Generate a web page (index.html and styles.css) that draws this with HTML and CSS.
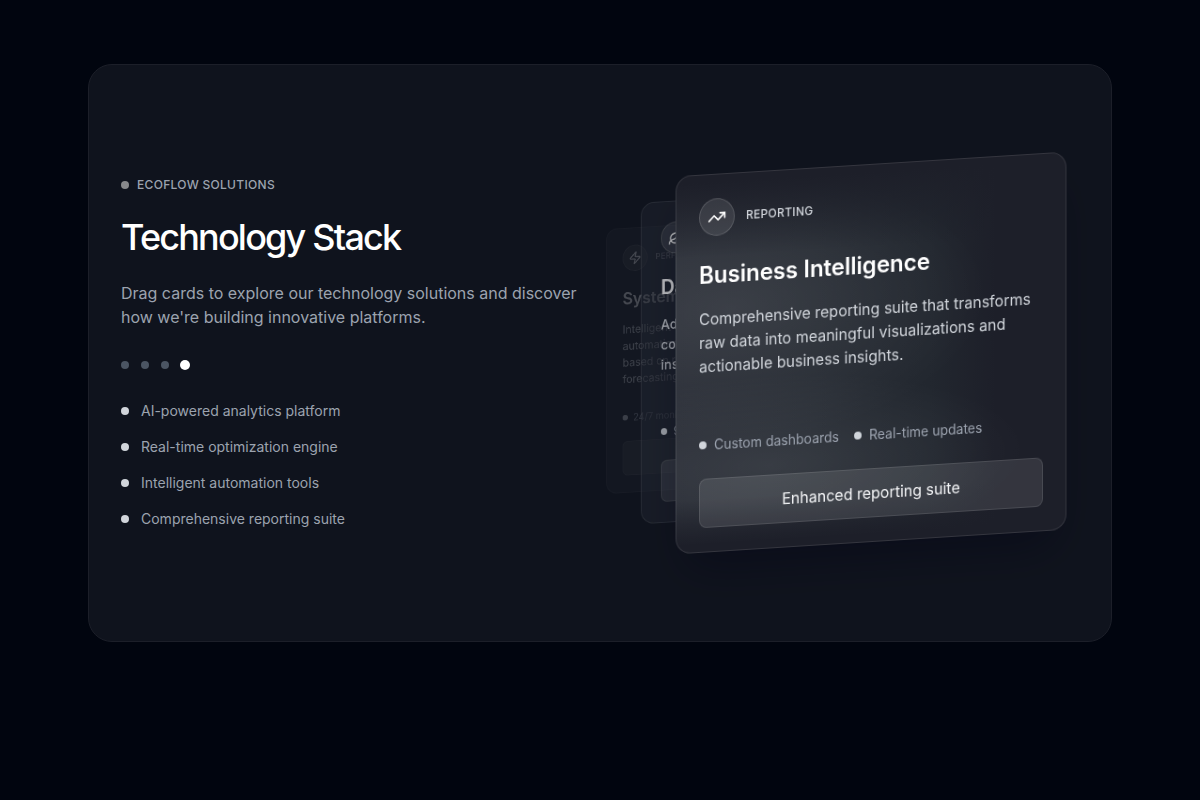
FILE: index.html
```html
<!DOCTYPE html>
<html lang="en">
<head>
<meta charset="utf-8">
<meta name="viewport" content="width=device-width, initial-scale=1">
<title>Technology Stack</title>
<link rel="stylesheet" href="styles.css">
</head>
<body>
<main class="page">
  <section class="panel">
    <div class="intro">
      <div class="eyebrow"><span class="eyebrow-dot"></span>ECOFLOW SOLUTIONS</div>
      <h1 class="title">Technology Stack</h1>
      <p class="lead">Drag cards to explore our technology solutions and discover how we're building innovative platforms.</p>
      <div class="pager">
        <button class="pager-dot" type="button" aria-label="Card 1"></button>
        <button class="pager-dot" type="button" aria-label="Card 2"></button>
        <button class="pager-dot" type="button" aria-label="Card 3"></button>
        <button class="pager-dot pager-dot-active" type="button" aria-label="Card 4"></button>
      </div>
      <ul class="features">
        <li class="feature">AI-powered analytics platform</li>
        <li class="feature">Real-time optimization engine</li>
        <li class="feature">Intelligent automation tools</li>
        <li class="feature">Comprehensive reporting suite</li>
      </ul>
    </div>

    <div class="stage">
      <article class="card card-back">
        <header class="card-head">
          <span class="card-icon"><svg viewBox="0 0 24 24"><path d="M4 14a1 1 0 0 1-.78-1.63l9.9-10.2a.5.5 0 0 1 .86.46l-1.92 6.02A1 1 0 0 0 13 10h7a1 1 0 0 1 .78 1.63l-9.9 10.2a.5.5 0 0 1-.86-.46l1.92-6.02A1 1 0 0 0 11 14z"/></svg></span>
          <span class="card-label">PERFORMANCE</span>
        </header>
        <h2 class="card-title">System Optimization</h2>
        <p class="card-text">Intelligent workflow orchestration with smart automation of repetitive business operations based on real-time usage and demand forecasting.</p>
        <div class="card-tags"><span class="tag">24/7 monitoring</span><span class="tag">Auto-scaling</span></div>
        <button class="card-action" type="button">Real-time optimization</button>
      </article>

      <article class="card card-middle">
        <header class="card-head">
          <span class="card-icon"><svg viewBox="0 0 24 24"><path d="M11 20A7 7 0 0 1 9.8 6.1C15.5 5 17 4.48 19 2c1 2 2 4.18 2 8 0 5.5-4.78 10-10 10Z"/><path d="M2 21c0-3 1.85-5.36 5.08-6C9.5 14.52 12 13 13 12"/></svg></span>
          <span class="card-label">ANALYTICS</span>
        </header>
        <h2 class="card-title">Data Analytics</h2>
        <p class="card-text">Advanced machine learning models that deliver comprehensive data analysis and actionable insights for your business.</p>
        <div class="card-tags"><span class="tag">99% accuracy</span><span class="tag">Live insights</span></div>
        <button class="card-action" type="button">AI-powered analytics</button>
      </article>

      <article class="card card-front">
        <header class="card-head">
          <span class="card-icon"><svg viewBox="0 0 24 24"><path d="M22 7l-8.5 8.5-5-5L2 17"/><path d="M16 7h6v6"/></svg></span>
          <span class="card-label">REPORTING</span>
        </header>
        <h2 class="card-title">Business Intelligence</h2>
        <p class="card-text">Comprehensive reporting suite that transforms raw data into meaningful visualizations and actionable business insights.</p>
        <div class="card-tags"><span class="tag">Custom dashboards</span><span class="tag">Real-time updates</span></div>
        <button class="card-action" type="button">Enhanced reporting suite</button>
      </article>
    </div>
  </section>
</main>
</body>
</html>
```
FILE: styles.css
```css
* { box-sizing: border-box; }

body {
  margin: 0;
  min-height: 100vh;
  background: #01050f;
  color: #fff;
  font-family: Inter, "Liberation Sans", sans-serif;
}

h1, h2, p, ul { margin: 0; padding: 0; }

button { font: inherit; color: inherit; cursor: pointer; }

.page {
  max-width: 1088px;
  margin: 0 auto;
  padding: 64px 32px;
}

.panel {
  display: grid;
  grid-template-columns: 1fr 1fr;
  gap: 32px;
  align-items: center;
  padding: 32px;
  border: 1px solid #1c1f29;
  border-radius: 24px;
  background: #0f131d;
}

.eyebrow {
  display: flex;
  align-items: center;
  gap: 8px;
  font-size: 12px;
  line-height: 16px;
  font-weight: 500;
  letter-spacing: 0.3px;
  color: #9ca3af;
}

.eyebrow-dot {
  width: 8px;
  height: 8px;
  border-radius: 50%;
  background: #87888b;
}

.title {
  margin-top: 24px;
  font-size: 36px;
  line-height: 40px;
  font-weight: 500;
  letter-spacing: -1.8px;
}

.lead {
  margin-top: 24px;
  font-size: 16px;
  line-height: 24px;
  color: #9ca3af;
}

.pager {
  display: flex;
  gap: 12px;
  margin-top: 32px;
}

.pager-dot {
  width: 8px;
  height: 8px;
  padding: 0;
  border: 0;
  border-radius: 50%;
  background: #4b5563;
}

.pager-dot-active {
  background: #fff;
  transform: scale(1.25);
}

.features {
  display: flex;
  flex-direction: column;
  gap: 16px;
  margin-top: 32px;
  list-style: none;
}

.feature {
  display: flex;
  align-items: center;
  gap: 12px;
  font-size: 14px;
  line-height: 20px;
  color: #9ca3af;
}

.feature::before,
.tag::before {
  content: "";
  flex: none;
  width: 8px;
  height: 8px;
  border-radius: 50%;
  background: #d1d5db;
}

.stage {
  display: grid;
  place-items: center;
  height: 512px;
}

.card {
  grid-area: 1 / 1;
  display: flex;
  flex-direction: column;
  width: 100%;
  max-width: 416px;
  height: 384px;
  padding: 24px;
  border: 1px solid rgba(255, 255, 255, 0.1);
  border-radius: 16px;
  background: rgba(255, 255, 255, 0.06);
  will-change: transform;
}

.card-front {
  transform: translateX(23px) rotateX(-10deg) rotateY(20deg);
  background:
    linear-gradient(180deg, #1d1f29 2%, rgba(29, 31, 41, 0) 22%, rgba(29, 31, 41, 0) 86%, #1d1f29 98%),
    radial-gradient(ellipse 66% 36% at 14% 36%, rgba(255, 255, 255, 0.09), rgba(255, 255, 255, 0)),
    radial-gradient(ellipse 66% 24% at 24% 78%, rgba(255, 255, 255, 0.08), rgba(255, 255, 255, 0)),
    linear-gradient(90deg, #292d36 0%, #262b33 35%, #22272f 65%, #1d1f29 82%);
  background-origin: border-box;
  box-shadow: 0 25px 50px -12px rgba(0, 0, 20, 0.4);
}

.card-middle {
  transform: translateX(-41px) rotateX(-10deg) rotateY(20deg) scale(0.85);
  background: rgba(33, 38, 48, 0.6);
  opacity: 0.7;
}

.card-back {
  transform: translateX(-105px) rotateX(-10deg) rotateY(20deg) scale(0.7);
  opacity: 0.22;
}

.card-head {
  display: flex;
  align-items: center;
  gap: 12px;
}

.card-icon {
  display: grid;
  place-items: center;
  width: 38px;
  height: 38px;
  border: 1px solid rgba(255, 255, 255, 0.15);
  border-radius: 50%;
  background: rgba(255, 255, 255, 0.1);
}

.card-icon svg {
  width: 20px;
  height: 20px;
  fill: none;
  stroke: #fff;
  stroke-width: 2;
  stroke-linecap: round;
  stroke-linejoin: round;
}

.card-label {
  font-size: 12px;
  line-height: 16px;
  font-weight: 500;
  letter-spacing: 0.3px;
  color: #d1d5db;
}

.card-title {
  margin-top: 24px;
  font-size: 24px;
  line-height: 32px;
  font-weight: 600;
}

.card-text {
  margin-top: 16px;
  font-size: 16px;
  line-height: 24px;
  color: #d1d5db;
}

.card-middle .card-text { font-weight: 500; }

.card-tags {
  display: flex;
  gap: 16px;
  margin-top: auto;
  font-size: 14px;
  line-height: 20px;
  color: #9ca3af;
}

.tag {
  display: flex;
  align-items: center;
  gap: 8px;
  white-space: nowrap;
}

.card-action {
  height: 50px;
  margin-top: 24px;
  border: 1px solid rgba(255, 255, 255, 0.1);
  border-radius: 8px;
  background: rgba(255, 255, 255, 0.1);
  font-size: 16px;
  font-weight: 400;
  color: #f3f4f6;
}
```
